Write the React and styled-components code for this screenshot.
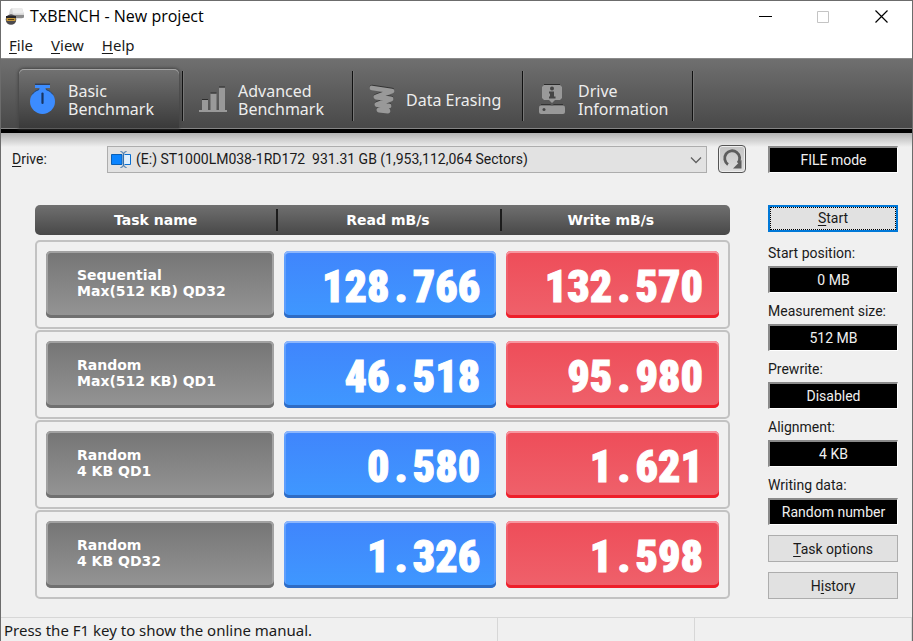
import React, { useState } from "react";
import styled, { createGlobalStyle } from "styled-components";

const tabs = [
  { id: "basic", label: "Basic\nBenchmark" },
  { id: "advanced", label: "Advanced\nBenchmark" },
  { id: "erase", label: "Data Erasing" },
  { id: "info", label: "Drive\nInformation" },
];

const tasks = [
  { name: "Sequential\nMax(512 KB) QD32", read: "128.766", write: "132.570" },
  { name: "Random\nMax(512 KB) QD1", read: "46.518", write: "95.980" },
  { name: "Random\n4 KB QD1", read: "0.580", write: "1.621" },
  { name: "Random\n4 KB QD32", read: "1.326", write: "1.598" },
];

const settings = [
  { id: "start-position", label: "Start position:", value: "0 MB" },
  { id: "measurement-size", label: "Measurement size:", value: "512 MB" },
  { id: "prewrite", label: "Prewrite:", value: "Disabled" },
  { id: "alignment", label: "Alignment:", value: "4 KB" },
  { id: "writing-data", label: "Writing data:", value: "Random number" },
];

const AppLogo = () => (
  <svg width="20" height="20" viewBox="0 0 20 20" aria-hidden="true">
    <path d="M5 2.5 7 1h10l2 6v3l-2 1H9L4 7z" fill="#d5d5d5" />
    <path d="M7 1h10l1.6 5.5H8z" fill="#ececec" />
    <path d="M9 8h10v2.5l-2 .8H9z" fill="#8c8c8c" />
    <circle cx="6" cy="12.5" r="5.3" fill="#4c4a4e" />
    <path d="M1 9h10v2H1z" fill="#26252a" />
    <path d="M1.5 11h9v3h-9z" fill="#c5983b" />
    <path d="M3 12.5h6" stroke="#5c4214" />
  </svg>
);

const TabIcon = ({ id }) => {
  if (id === "basic") {
    return (
      <svg width="28" height="34" viewBox="0 0 28 34" aria-hidden="true">
        <path d="M6 1.2h15" stroke="#1a2f57" />
        <path d="M6 2h15v3h-4.500V8h-6V5H6z" fill="#3c8cff" />
        <circle cx="13.500" cy="18.500" r="12.500" fill="#3c8cff" />
        <path d="M3 11.500a12.500 12.500 0 0 1 7-5M17 6.500a12.500 12.500 0 0 1 7 5" stroke="#23436f" fill="none" />
        <path d="M13.500 10.500v9.500" stroke="#173563" strokeWidth="2.200" strokeLinecap="round" />
      </svg>
    );
  }
  if (id === "advanced") {
    return (
      <svg width="28" height="28" viewBox="0 0 28 28" aria-hidden="true">
        <path d="M3 14h6v10H3zM11.500 7.500h6V24h-6zM20 1.500h6V24h-6zM0 24h28v2H0z" fill="#999" />
        <path d="M3 13.500h6M11.500 7h6M20 1h6" stroke="#2c2c2c" />
      </svg>
    );
  }
  if (id === "erase") {
    return (
      <svg width="26" height="32" viewBox="1 1 26 32" aria-hidden="true">
        <path
          d="M4 4 24 7 8 13 23 15 9 20.500 21 22 11 26 20 27"
          stroke="#333"
          strokeWidth="4.500"
          strokeLinecap="round"
          strokeLinejoin="round"
          fill="none"
        />
        <path
          d="M4 5 24 8 8 14 23 16 9 21.500 21 23 11 27 20 28"
          stroke="#999"
          strokeWidth="4.800"
          strokeLinecap="round"
          strokeLinejoin="round"
          fill="none"
        />
      </svg>
    );
  }
  return (
    <svg width="28" height="32" viewBox="1 2 28 32" aria-hidden="true">
      <path d="M6 2.500h16" stroke="#2c2c2c" />
      <path d="M6 3h16l2 2v11l-2 2h-5l-3 3-3-3H6l-2-2V5z" fill="#999" />
      <circle cx="14" cy="6.500" r="2" fill="#454545" />
      <path d="M11 9.500h5v5h1.500v2H11v-2h1v-3h-1z" fill="#454545" />
      <path d="M3 22.500h9l2 1.500 2-1.500h9" stroke="#333" fill="none" />
      <rect x="1" y="23.500" width="26" height="8.500" rx="2" fill="#999" />
      <circle cx="6" cy="27.500" r="1.500" fill="#454545" />
    </svg>
  );
};

const DriveIcon = () => (
  <svg width="22" height="20" viewBox="0 0 22 20" aria-hidden="true">
    <path d="M.5 4.500h10.500v10H.5z" fill="#0a84ff" stroke="#0a5fb4" />
    <path d="M13.500 4.500h6v10h-6" fill="#dff0ff" stroke="#0a6fd0" />
    <path d="M9.500 1.500q3 0 3 3v10q0 3-3 3M15.500 1.500q-3 0-3 3v10q0 3 3 3" stroke="#356fa8" fill="none" />
  </svg>
);

const ReloadIcon = () => (
  <svg width="22" height="22" viewBox="0 0 22 22" aria-hidden="true">
    <path d="M7 16.500A7.500 7.500 0 1 1 17 15" stroke="#5d5d5d" strokeWidth="2.800" fill="none" />
    <path d="M20.500 12v8.500H12z" fill="#5d5d5d" />
  </svg>
);

const Score = ({ value }) => {
  const [whole, fraction] = value.split(".");
  return (
    <>
      {whole}
      <Point>.</Point>
      {fraction}
    </>
  );
};

const App = () => {
  const [tab, setTab] = useState("basic");

  return (
    <Window>
      <GlobalStyle />
      <TitleBar>
        <AppLogo />
        <h1>TxBENCH - New project</h1>
        <CaptionButton aria-label="Minimize">
          <svg width="13" height="13" viewBox="0 0 13 13">
            <path d="M0 6.500h13" stroke="#000" />
          </svg>
        </CaptionButton>
        <CaptionButton aria-label="Maximize" disabled>
          <svg width="13" height="13" viewBox="0 0 13 13">
            <path d="M.5 1.500h11v11H.5z" stroke="#c4c4c4" fill="none" />
          </svg>
        </CaptionButton>
        <CaptionButton aria-label="Close">
          <svg width="13" height="13" viewBox="0 0 13 13">
            <path d="M.5.5l12 12M12.500.5l-12 12" stroke="#000" strokeWidth="1.200" />
          </svg>
        </CaptionButton>
      </TitleBar>
      <MenuBar>
        <MenuButton><u>F</u>ile</MenuButton>
        <MenuButton><u>V</u>iew</MenuButton>
        <MenuButton><u>H</u>elp</MenuButton>
      </MenuBar>
      <Toolbar>
        {tabs.map((t) => (
          <TabSlot key={t.id}>
            <TabButton $active={t.id === tab} onClick={() => setTab(t.id)}>
              <TabIcon id={t.id} />
              <span>{t.label}</span>
            </TabButton>
          </TabSlot>
        ))}
      </Toolbar>
      <Content>
        <Main>
          <DriveRow>
            <label htmlFor="drive"><u>D</u>rive:</label>
            <DriveField>
              <DriveIcon />
              <select id="drive">
                <option>
                  {"(E:) ST1000LM038-1RD172\u00a0 931.31 GB (1,953,112,064 Sectors)"}
                </option>
              </select>
              <Chevron width="12" height="8" viewBox="0 0 12 8" aria-hidden="true">
                <path d="M1 1.500l5 5 5-5" stroke="#606060" strokeWidth="1.300" fill="none" />
              </Chevron>
            </DriveField>
            <ReloadButton aria-label="Reload drives">
              <ReloadIcon />
            </ReloadButton>
          </DriveRow>
          <Results>
            <thead>
              <HeadRow>
                <th>Task name</th>
                <th>Read mB/s</th>
                <th>Write mB/s</th>
              </HeadRow>
            </thead>
            <tbody>
              {tasks.map((task) => (
                <TaskRow key={task.name}>
                  <NameCell>{task.name}</NameCell>
                  <ReadCell><Score value={task.read} /></ReadCell>
                  <WriteCell><Score value={task.write} /></WriteCell>
                </TaskRow>
              ))}
            </tbody>
          </Results>
        </Main>
        <Sidebar>
          <ValueButton>FILE mode</ValueButton>
          <StartButton><span><u>S</u>tart</span></StartButton>
          {settings.map((s) => (
            <Setting key={s.id}>
              <label htmlFor={s.id}>{s.label}</label>
              <ValueButton id={s.id}>{s.value}</ValueButton>
            </Setting>
          ))}
          <PushButton><u>T</u>ask options</PushButton>
          <PushButton>H<u>i</u>story</PushButton>
        </Sidebar>
      </Content>
      <StatusBar>
        <span>Press the F1 key to show the online manual.</span>
        <span />
        <span />
      </StatusBar>
    </Window>
  );
};

const GlobalStyle = createGlobalStyle`
  * {
    box-sizing: border-box;
  }

  body {
    margin: 0;
    background: #f0f0f0;
    color: #1a1a1a;
    font: 14px/18px Roboto, "Noto Sans", sans-serif;
  }

  button, select {
    font: inherit;
    color: inherit;
    padding: 0;
    cursor: pointer;
  }

  u {
    text-underline-offset: 2px;
  }
`;

const Window = styled.div`
  display: flex;
  flex-direction: column;
  min-height: 100vh;
  border: 1px solid #6c6c6c;
  border-bottom: none;
`;

const TitleBar = styled.header`
  display: flex;
  align-items: center;
  height: 31px;
  padding-left: 4px;
  background: #fff;

  h1 {
    flex: 1;
    margin: 0 0 2px 5px;
    color: #000;
    font: 16px/20px "Open Sans", sans-serif;
  }
`;

const CaptionButton = styled.button`
  display: grid;
  place-items: center;
  width: 58px;
  height: 31px;
  border: none;
  background: none;

  &:last-child {
    margin-right: 2px;
  }
`;

const MenuBar = styled.nav`
  display: flex;
  gap: 18px;
  height: 26px;
  padding-left: 8px;
  background: #fff;
`;

const MenuButton = styled.button`
  height: 26px;
  border: none;
  background: none;
  font: 15px/20px "Noto Sans", sans-serif;
`;

const Toolbar = styled.nav`
  display: flex;
  height: 75px;
  padding: 11px 13px 0;
  border-bottom: 4px solid #000;
  background: linear-gradient(#707070, #484848);
  box-shadow: inset 0 -1px #858585, inset 0 1px #8a8a8a;
`;

const TabSlot = styled.div`
  width: 170px;
  padding: 0 5px;
  background: linear-gradient(90deg, #111 1px, #777 1px) right 0 top 2px / 2px 50px no-repeat;
`;

const TabButton = styled.button`
  display: flex;
  align-items: center;
  gap: 11px;
  width: 160px;
  height: 59px;
  padding: 2px 10px 0;
  border: none;
  border-radius: 5px 5px 0 0;
  background: ${(p) => (p.$active ? "linear-gradient(#727272, #3a3a3a)" : "none")};
  box-shadow: ${(p) =>
    p.$active ? "inset 0 1px #a5a5a5, 0 0 3px 1px #444" : "none"};
  color: #ededed;
  font: 16px/18px "Noto Sans", sans-serif;
  text-align: left;
  white-space: pre;
`;

const Content = styled.div`
  display: grid;
  grid-template-columns: 1fr 130px;
  gap: 22px;
  flex: 1;
  padding: 12px 14px 17px 11px;
  background: linear-gradient(#b0b0b0, #f0f0f0 14px);
`;

const Main = styled.main`
  display: flex;
  flex-direction: column;
  gap: 32px;
`;

const DriveRow = styled.div`
  display: grid;
  grid-template-columns: 84px 1fr 28px;
  column-gap: 11px;
  align-items: center;
  height: 28px;
`;

const DriveField = styled.div`
  position: relative;
  display: flex;

  select {
    width: 100%;
    height: 27px;
    padding: 0 28px;
    border: 1px solid #adadad;
    background: #e2e2e2;
    appearance: none;
  }

  svg {
    position: absolute;
    top: 4px;
    left: 4px;
    pointer-events: none;
  }
`;

const Chevron = styled.svg`
  && {
    top: 10px;
    left: auto;
    right: 5px;
  }
`;

const ReloadButton = styled.button`
  display: grid;
  place-items: center;
  width: 28px;
  height: 28px;
  border: 1px solid #555;
  border-radius: 4px;
  background: linear-gradient(#c4c4c4, #dedede);
  box-shadow: inset 0 0 0 1px #eee;
`;

const Results = styled.table`
  display: block;
  margin: 0 16px 0 23px;

  thead, tbody {
    display: grid;
    gap: 1px;
  }

  thead {
    margin-bottom: 5px;
  }
`;

const HeadRow = styled.tr`
  display: grid;
  grid-template-columns: 241fr 223fr 230fr;
  align-items: center;
  height: 30px;
  border-radius: 5px;
  background: linear-gradient(#707070, #484848);
  color: #fff;
  font: bold 14px/22px "DejaVu Sans", sans-serif;

  th {
    padding: 0;
  }

  th + th {
    padding-right: 2px;
    border-left: 2px solid #1c1c1c;
  }

  th:last-child {
    padding-right: 10px;
  }
`;

const TaskRow = styled.tr`
  display: grid;
  grid-template-columns: 227fr 212fr 212fr;
  gap: 10px;
  height: 89px;
  padding: 9px;
  border: 2px solid #c2c2c2;
  border-radius: 5px;
`;

const Cell = styled.td`
  display: flex;
  align-items: center;
  min-width: 0;
  padding: 0;
  border-radius: 5px;
  color: #fff;
`;

const NameCell = styled(Cell)`
  padding: 0 0 3px 31px;
  background: linear-gradient(#757575, #959595);
  box-shadow: inset 0 -3px #707070, inset 0 0 0 2px #a2a2a2;
  font: bold 14px/16px "DejaVu Sans", sans-serif;
  white-space: pre;
`;

const ScoreCell = styled(Cell)`
  justify-content: flex-end;
  padding: 4px 16px 0 0;
  font: 900 44px/56px "Noto Sans Condensed", "Roboto Condensed", "Open Sans Condensed", "Liberation Sans", sans-serif;
  -webkit-text-stroke: 1px #fff;
`;

const ReadCell = styled(ScoreCell)`
  background: linear-gradient(#4085fc, #3f98ff);
  box-shadow: inset 0 -3px #2f6cc4, inset 0 2px #8db6fc, inset 0 0 0 2px #5f9efc;
`;

const WriteCell = styled(ScoreCell)`
  background: linear-gradient(#ee4d59, #ef616b);
  box-shadow: inset 0 -3px #ee1f2a, inset 0 2px #f796a0, inset 0 0 0 2px #f0606c;
`;

const Point = styled.span`
  padding: 0 5px;
`;

const Sidebar = styled.aside`
  display: flex;
  flex-direction: column;
  padding-top: 1px;
`;

const ValueButton = styled.button`
  width: 100%;
  height: 27px;
  border: 1px solid;
  border-width: 2px 1px 1px 2px;
  border-color: #8a8a8a #fff #fff #8a8a8a;
  background: #000;
  color: #f0f0f0;
`;

const PushButton = styled.button`
  height: 27px;
  margin-top: 10px;
  border: 1px solid #adadad;
  background: #e1e1e1;
`;

const StartButton = styled.button`
  height: 27px;
  margin: 32px 0 3px;
  border: 2px solid #0078d7;
  background: #e1e1e1;

  span {
    display: block;
    border: 1px dotted #000;
    line-height: 21px;
  }
`;

const Setting = styled.div`
  padding-top: 9px;

  label {
    display: block;
    margin-bottom: 4px;
  }
`;

const StatusBar = styled.footer`
  display: grid;
  grid-template-columns: 497fr 197fr 217fr;
  height: 24px;
  border-top: 1px solid #d7d7d7;
  font: 15px/25px "Noto Sans", sans-serif;

  span {
    padding-left: 3px;
    border-right: 1px solid #d7d7d7;
  }
`;

export default App;
